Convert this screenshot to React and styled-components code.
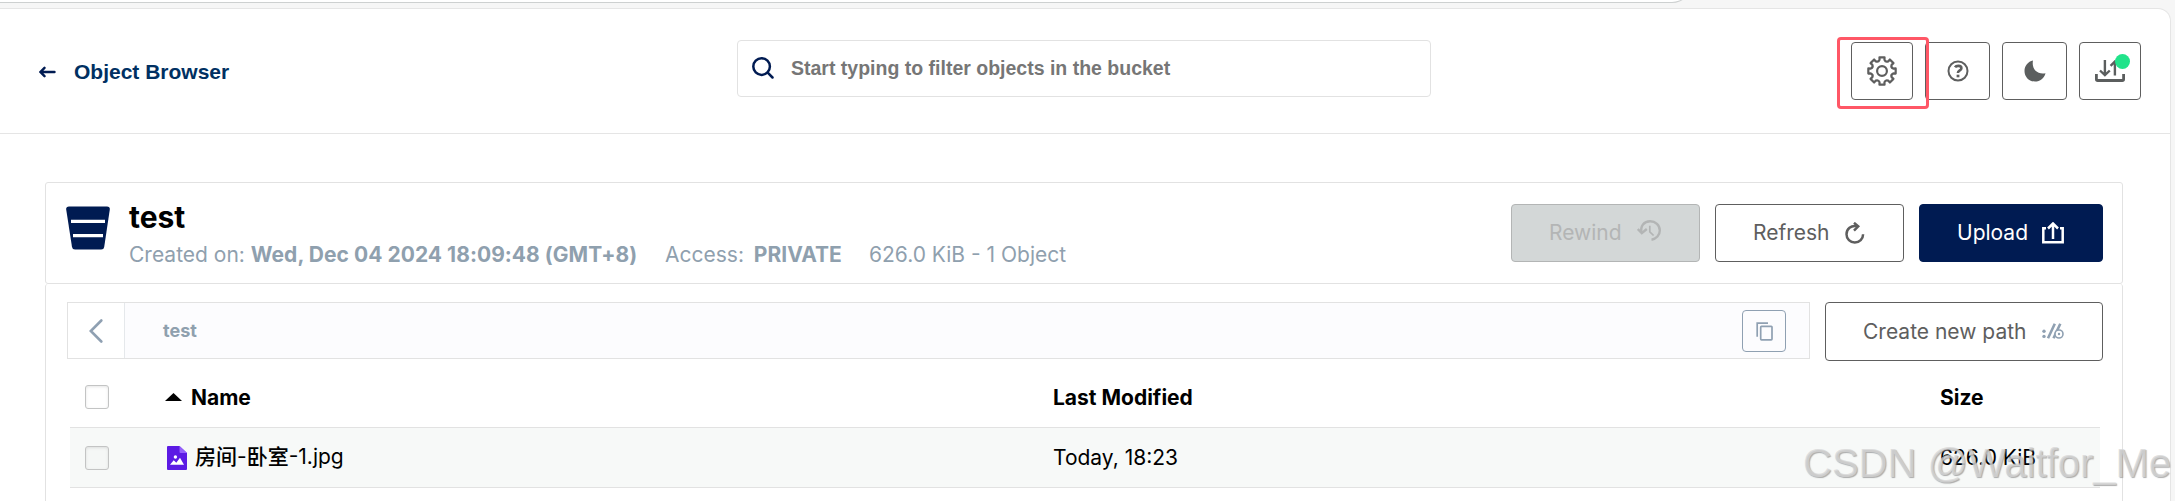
import React from 'react'
import styled, { createGlobalStyle } from 'styled-components';

function App() {
    return (
        <>
            <GlobalStyle />
            <Shell>
                <TabStrip><TabEdge /></TabStrip>
                <Page>
                    <Header />
                    <Content>
                        <BucketHeader />
                        <Browser>
                            <PathBar />
                            <ObjectTable />
                        </Browser>
                    </Content>
                </Page>
                <Highlight />
                <Watermark>CSDN @Waitfor_Me</Watermark>
            </Shell>
        </>
    )
}

export default App;

function Header() {
    return (
        <HeaderContainer>
            <BackLink>
                <ArrowIcon />
                <span>Object Browser</span>
            </BackLink>
            <SearchBox>
                <SearchIcon />
                <span>Start typing to filter objects in the bucket</span>
            </SearchBox>
            <HeaderActions>
                <IconButton $width={62}><GearIcon /></IconButton>
                <IconButton $width={65}><HelpIcon /></IconButton>
                <IconButton $width={65}><MoonIcon /></IconButton>
                <IconButton $width={62}>
                    <TransferIcon />
                    <Dot />
                </IconButton>
            </HeaderActions>
        </HeaderContainer>
    )
}

function BucketHeader() {
    return (
        <BucketPanel>
            <BucketIcon />
            <BucketInfo>
                <BucketName>test</BucketName>
                <BucketMeta>
                    <MetaItem $width={536}>Created on: <b className="date">Wed, Dec 04 2024 18:09:48 (GMT+8)</b></MetaItem>
                    <MetaItem $width={204}>Access: <b className="access">PRIVATE</b></MetaItem>
                    <MetaItem>626.0 KiB - 1 Object</MetaItem>
                </BucketMeta>
            </BucketInfo>
            <BucketActions>
                <Button $width={189} $variant="disabled"><span>Rewind</span><RewindIcon /></Button>
                <Button $width={189}><span>Refresh</span><RefreshIcon /></Button>
                <Button $width={184} $variant="primary"><span>Upload</span><UploadIcon /></Button>
            </BucketActions>
        </BucketPanel>
    )
}

function PathBar() {
    return (
        <PathRow>
            <Breadcrumbs>
                <BackButton><ChevronIcon /></BackButton>
                <Crumb>test</Crumb>
                <CopyButton><CopyIcon /></CopyButton>
            </Breadcrumbs>
            <Button $width={278} $height={59}><span>Create new path</span><PathIcon /></Button>
        </PathRow>
    )
}

function ObjectTable() {
    return (
        <Table>
            <HeadRow>
                <Checkbox />
                <NameCell><SortIcon />Name</NameCell>
                <span>Last Modified</span>
                <span>Size</span>
            </HeadRow>
            <Row>
                <Checkbox $shaded />
                <FileCell>
                    <FileIcon />
                    <FileName><em>房间</em>-<em>卧室</em>-1.jpg</FileName>
                </FileCell>
                <span>Today, 18:23</span>
                <span>626.0 KiB</span>
            </Row>
        </Table>
    )
}

const ArrowIcon = () => (
    <svg width="17" height="12" viewBox="0 0 17 12" fill="none" stroke="#001b52" strokeWidth="2.4" strokeLinecap="round">
        <path d="M15.5 6H1.8M5.5 1.8L1.5 6l4 4.2" />
    </svg>
)

const SearchIcon = () => (
    <svg width="22" height="22" viewBox="0 0 22 22" fill="none" stroke="#001b52" strokeWidth="2.5" strokeLinecap="round">
        <circle cx="9.6" cy="9.6" r="8.3" />
        <path d="M15.7 15.7l4.8 4.8" />
    </svg>
)

// eight blunt teeth with rounded valleys between them
const gearPath = () => {
    const at = (degrees, radius) => {
        const angle = (degrees - 90) * Math.PI / 180
        return `${(15 + radius * Math.cos(angle)).toFixed(2)} ${(15 + radius * Math.sin(angle)).toFixed(2)}`
    }
    let path = ''
    for (let i = 0; i < 8; i++) {
        const mid = i * 45
        path += `${i ? 'L' : 'M'}${at(mid - 10.5, 13.9)}L${at(mid + 10.5, 13.9)}L${at(mid + 12.5, 11.4)}`
        path += `Q${at(mid + 22.5, 9.3)} ${at(mid + 32.5, 11.4)}`
    }
    return `${path}Z`
}

const GearIcon = () => (
    <svg width="30" height="30" viewBox="0 0 30 30" fill="none" stroke="#5e5e5e" strokeWidth="2.2" strokeLinejoin="round">
        <path d={gearPath()} />
        <circle cx="15" cy="15" r="4.9" />
    </svg>
)

const HelpIcon = () => (
    <svg width="22" height="22" viewBox="0 0 22 22" fill="none" stroke="#5e5f5f">
        <circle cx="11" cy="11" r="9.5" strokeWidth="2" />
        <path d="M8 7.2C9 5.6 14.4 5 14.4 8.2c0 2.3-3.5 2.2-3.5 4.9" strokeWidth="2.6" />
        <path d="M9.6 14.7h2.8v2.6H9.6z" fill="#5e5f5f" stroke="none" />
    </svg>
)

const MoonIcon = () => (
    <svg width="22" height="22" viewBox="0 0 22 22" fill="#5b5e5e">
        <path d="M9 .5C4 1.6.5 5.8.5 10.9.5 16.700 5 21.500 11 21.500c5 0 9.400-3.400 10.500-8.300C13.200 14.800 7.400 8.800 9 .5z" />
    </svg>
)

const TransferIcon = () => (
    <svg width="30" height="22" viewBox="0 0 30 22" fill="none" stroke="#5b5e5e">
        <path d="M1.400 14v5.200q0 1.300 1.300 1.300h24.600q1.300 0 1.300-1.300V14" strokeWidth="2.8" />
        <path d="M9.900 0v14.500M5 10.500l4.900 4.600 4.900-4.600M19.900 15.500V2M15.600 5.800l4.300-4.300 4.300 4.300" strokeWidth="2.4" />
    </svg>
)

const BucketIcon = () => (
    <svg width="44" height="44" viewBox="0 0 44 44">
        <path d="M3 .4h38q3.200 0 2.800 3.200l-5.600 37.500q-.4 2.500-3 2.500H9q-2.600 0-3-2.500L.2 3.600Q-.2.4 3 .4z" fill="#001b52" />
        <path d="M5 15.300h34M7 29.700h30" stroke="#fff" strokeWidth="3.2" />
    </svg>
)

const RewindIcon = () => (
    <svg className="raised" width="24" height="21" viewBox="0 0 24 21" fill="none" stroke="#b3b5b5" strokeWidth="2.4">
        <path d="M4.600 12.500C3 6 7 1.200 13.200 1.200c5.200 0 9.600 4 9.600 9.200 0 4.800-3.500 8.500-8.300 9.300" />
        <path d="M.8 9l4 4.200L9.800 9" />
        <path d="M12.800 5.800v6l3.800 3.700" strokeWidth="1.7" />
    </svg>
)

const RefreshIcon = () => (
    <svg width="20" height="22" viewBox="0 0 20 22" fill="none" stroke="#5e5e5e" strokeWidth="2.5">
        <path d="M12 4.300C6 3 1.500 7 1.500 12.300c0 4.700 3.700 8.300 8.300 8.300 4.700 0 8.300-3.600 8.300-8.300" />
        <path d="M9 .8l4.200 3.600-4.200 4.200" />
    </svg>
)

const UploadIcon = () => (
    <svg width="22" height="22" viewBox="0 0 22 22" fill="none" stroke="#fff" strokeWidth="2.5">
        <path d="M4 6.200H1.300v14h19.400v-14H18" />
        <path d="M11 17V2M6 6.500l5-5 5 5" />
    </svg>
)

const ChevronIcon = () => (
    <svg width="14" height="24" viewBox="0 0 14 24" fill="none" stroke="#8fa0b2" strokeWidth="2.6" strokeLinecap="round">
        <path d="M12.300 1.500L1.800 12l10.500 10.500" />
    </svg>
)

const CopyIcon = () => (
    <svg width="17" height="19" viewBox="0 0 17 19" fill="none" stroke="#8fa0b2" strokeWidth="1.7">
        <rect x="4.700" y="4.300" width="11.300" height="13.600" rx=".8" />
        <path d="M1.200 14.700V1.200H12" />
    </svg>
)

const PathIcon = () => (
    <svg width="22" height="16" viewBox="0 0 22 16" fill="none" stroke="#8fa0b2">
        <circle cx="2" cy="8.300" r="1.700" fill="#8fa0b2" stroke="none" />
        <circle cx="2" cy="13.400" r="1.700" fill="#8fa0b2" stroke="none" />
        <path d="M6 15.200L12.800.8M11.500 15.200L18.300.8" strokeWidth="2.6" />
        <circle cx="17" cy="11" r="4" fill="#fff" strokeWidth="1.6" />
        <circle cx="17" cy="11" r="1.200" fill="#8fa0b2" stroke="none" />
    </svg>
)

const SortIcon = () => (
    <svg width="17" height="8" viewBox="0 0 17 8"><path d="M0 8l8.500-8L17 8z" /></svg>
)

const FileIcon = () => (
    <svg width="20" height="24" viewBox="0 0 20 24">
        <path d="M1 0h11.500L20 7v16q0 1-1 1H1q-1 0-1-1V1q0-1 1-1z" fill="#5c1be4" />
        <path d="M12.500 0L20 7h-6.500q-1 0-1-1z" fill="#9561fb" />
        <circle cx="8.400" cy="11" r="1.700" fill="#fff" />
        <path d="M3 18.700l3.700-4.500 2.600 2.600 3.700-5 4 6.900z" fill="#fff" />
    </svg>
)

const GlobalStyle = createGlobalStyle`
    * {
        box-sizing: border-box;
    }
    body {
        margin: 0;
        background: #f6f6f6;
        color: #000;
        font-family: Inter, 'Noto Sans CJK SC', sans-serif;
        font-size: 21px;
    }
    svg {
        display: block;
        flex: none;
    }
`;

const Shell = styled.div`
    position: relative;
    width: 2175px;
    height: 501px;
    overflow: hidden;
`;

const TabStrip = styled.div`
    height: 8px;
    overflow: hidden;
`;

const TabEdge = styled.div`
    width: 1692px;
    height: 20px;
    margin-top: -17px;
    background: #fff;
    border: 1px solid #cdd0d0;
    border-width: 0 1px 1px 0;
    border-radius: 0 0 20px 0;
`;

const Page = styled.div`
    width: 2171px;
    height: 520px;
    background: #fff;
    border: 1px solid #e5e5e5;
    border-left: 0;
    border-radius: 0 13px 0 0;
`;

const HeaderContainer = styled.div`
    display: flex;
    height: 125px;
    padding: 31px 29px 0 39px;
    border-bottom: 1px solid #e5e5e5;
`;

const BackLink = styled.div`
    display: flex;
    align-items: center;
    gap: 18px;
    width: 698px;
    height: 63px;
    color: #003062;
    font-family: 'Liberation Sans', sans-serif;
    font-weight: 700;
`;

const SearchBox = styled.div`
    display: flex;
    align-items: center;
    gap: 17px;
    width: 694px;
    height: 57px;
    padding: 0 14px 1px;
    border: 1px solid #e2e2e2;
    border-radius: 4px;
    color: #767676;
    font-family: 'Liberation Sans', sans-serif;
    font-size: 19.5px;
    font-weight: 700;
`;

const HeaderActions = styled.div`
    display: flex;
    gap: 12px;
    margin: 2px 0 0 auto;
`;

const IconButton = styled.div`
    position: relative;
    display: flex;
    align-items: center;
    justify-content: center;
    width: ${props => props.$width}px;
    height: 58px;
    border: 1px solid #5e5e5e;
    border-radius: 4px;
`;

const Dot = styled.div`
    position: absolute;
    top: 11px;
    right: 10px;
    width: 15px;
    height: 15px;
    border-radius: 50%;
    background: #21e38a;
`;

// ring drawn over the settings button
const Highlight = styled.div`
    position: absolute;
    top: 37px;
    left: 1837px;
    width: 92px;
    height: 72px;
    border: 3px solid #ff5766;
    border-radius: 4px;
`;

const Content = styled.div`
    padding: 48px 47px 0 45px;
`;

const BucketPanel = styled.div`
    display: flex;
    height: 102px;
    padding: 0 19px 0 20px;
    border: 1px solid #e2e2e2;
    border-radius: 3px;
    & > svg {
        margin-top: 23px;
    }
`;

const BucketInfo = styled.div`
    margin: 16px 0 0 19px;
`;

const BucketName = styled.div`
    font-size: 30px;
    font-weight: 700;
    line-height: 36px;
`;

const BucketMeta = styled.div`
    display: flex;
    margin-top: 7px;
    line-height: 26px;
    color: #8fa0ae;
    .date {
        letter-spacing: 0.04px;
    }
    .access {
        margin-left: 4px;
    }
`;

const MetaItem = styled.div`
    width: ${props => props.$width ? `${props.$width}px` : 'auto'};
    white-space: nowrap;
`;

const BucketActions = styled.div`
    display: flex;
    gap: 15px;
    margin: 21px 0 0 auto;
`;

const variants = {
    disabled: 'background: #d3d7d7; border-color: #b3b5b5; color: #b3b5b5;',
    primary: 'background: #001b52; border-color: #001b52; color: #fff;',
}

const Button = styled.div`
    display: flex;
    align-items: center;
    justify-content: space-between;
    width: ${props => props.$width}px;
    height: ${props => props.$height || 58}px;
    padding: 0 38px 1px 37px;
    border: 1px solid #5e5e5e;
    border-radius: 4px;
    color: #5e5e5e;
    white-space: nowrap;
    ${props => variants[props.$variant]}
    .raised {
        margin-bottom: 5px;
    }
`;

const Browser = styled.div`
    height: 240px;
    padding: 18px 19px 0 21px;
    border: 1px solid #e2e2e2;
    border-top: 0;
    border-radius: 3px;
`;

const PathRow = styled.div`
    display: flex;
    align-items: flex-start;
    justify-content: space-between;
`;

const Breadcrumbs = styled.div`
    display: flex;
    align-items: center;
    width: 1743px;
    height: 57px;
    border: 1px solid #e2e2e2;
    background: #fcfcfe;
`;

const BackButton = styled.div`
    display: flex;
    align-items: center;
    width: 57px;
    height: 55px;
    padding-left: 21px;
    border-right: 1px solid #e5e8eb;
    background: #fff;
`;

const Crumb = styled.div`
    margin: 0 0 1px 38px;
    color: #8fa0ae;
    font-size: 18px;
    font-weight: 700;
`;

const CopyButton = styled.div`
    display: flex;
    align-items: center;
    justify-content: center;
    width: 44px;
    height: 42px;
    margin: 1px 23px 0 auto;
    border: 1px solid #8fa0b2;
    border-radius: 4px;
`;

const Table = styled.div`
    margin: 6px 3px 0;
`;

const HeadRow = styled.div`
    display: grid;
    grid-template-columns: 80px 888px 887px auto;
    align-items: center;
    height: 61px;
    padding-left: 15px;
    border-bottom: 1px solid #e2e2e2;
    font-weight: 700;
`;

const Row = styled(HeadRow)`
    height: 60px;
    background: #f7f9f8;
    font-weight: 400;
`;

const Checkbox = styled.div`
    width: 24px;
    height: 24px;
    border: 1px solid #c3c4c4;
    border-radius: 3px;
    background: ${props => props.$shaded ? '#f5f7f6' : '#fff'};
    box-shadow: inset 0 1px 3px rgba(0, 0, 0, 0.1);
`;

const NameCell = styled.div`
    display: flex;
    align-items: center;
    gap: 9px;
`;

const FileCell = styled.div`
    display: flex;
    align-items: center;
    gap: 8px;
    padding-left: 2px;
`;

const FileName = styled.div`
    margin-bottom: 1px;
    line-height: 24px;
    em {
        font-style: normal;
        font-weight: 500;
    }
`;

const Watermark = styled.div`
    position: absolute;
    top: 440px;
    left: 1803px;
    color: rgba(215, 215, 215, 0.75);
    font-family: 'Liberation Sans', sans-serif;
    font-size: 40px;
    line-height: 46px;
    text-shadow: 1px 1px 1px rgba(120, 120, 120, 0.6);
    white-space: nowrap;
`;
